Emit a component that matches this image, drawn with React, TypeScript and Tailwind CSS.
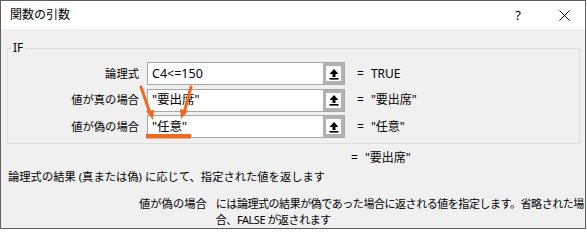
import React from "react";

const font = { fontFamily: '"Noto Sans", "Noto Sans CJK JP", sans-serif' };

function RefButton() {
  return (
    <div className="flex h-full w-[21px] items-center justify-center border-[3px] border-[#b2b2b2] bg-white">
      <svg width="10" height="12" viewBox="0 0 10 12">
        <path d="M5 1 L9.5 6 L6.5 6 L6.5 9 L3.5 9 L3.5 6 L0.5 6 Z" fill="#000" />
        <rect x="0.5" y="10" width="9" height="1.6" fill="#000" />
      </svg>
    </div>
  );
}

const rows = [
  { label: "論理式", input: "C4<=150", value: "TRUE" },
  { label: "値が真の場合", input: '"要出席"', value: '"要出席"' },
  { label: "値が偽の場合", input: '"任意"', value: '"任意"' },
];

export default function App() {
  return (
    <div className="relative h-[230px] w-[587px] bg-white text-[11.3px] leading-[16px] text-[#000]" style={font}>
      <div className="flex h-[229px] w-[586px] flex-col border border-[#5f5f5f]">
        <div className="flex h-[29px] items-center bg-white pl-[9px] pr-[15px]">
          <span className="text-[12px]">関数の引数</span>
          <span className="ml-auto mr-[38px] text-[13px] leading-none">?</span>
          <svg width="11" height="11" viewBox="0 0 11 11">
            <path d="M0.5 0.5 L10.5 10.5 M10.5 0.5 L0.5 10.5" stroke="#111" strokeWidth="1" />
          </svg>
        </div>

        <div className="flex-1 bg-[#f0f0f0] pl-[6px] pt-[12px]">
          <fieldset className="w-[573px] border border-[#dcdcdc] pb-[5px] pt-[7px]">
            <legend className="ml-[3px] px-[2px] text-[12px] leading-[14px]">IF</legend>
            <div className="flex flex-col gap-[3.5px]">
              {rows.map((r) => (
                <div key={r.label} className="flex h-[23px] items-center">
                  <div className="w-[131px] text-right">{r.label}</div>
                  <div className="ml-[8px] flex h-[23px] w-[198px] border border-[#a6a6a6] bg-white">
                    <div className="flex flex-1 items-center pl-[4px] text-[12.5px]">{r.input}</div>
                    <RefButton />
                  </div>
                  <span className="ml-[12px] text-[12px]">=</span>
                  <span className="ml-[7px] text-[12px]">{r.value}</span>
                </div>
              ))}
            </div>
          </fieldset>

          <div className="mt-[6px] flex h-[16px] items-center pl-[344px]">
            <span className="text-[12px]">=</span>
            <span className="ml-[7px] text-[12px]">"要出席"</span>
          </div>
          <div className="mt-[3px] pl-[1px]">論理式の結果 (真または偽) に応じて、指定された値を返します</div>

          <div className="mt-[11px] flex w-[578px] whitespace-nowrap pl-[132px]">
            <span>値が偽の場合</span>
            <span className="ml-[9px] text-[11px] tracking-[-0.45px]">
              には論理式の結果が偽であった場合に返される値を指定します。省略された場
              <br />
              合、FALSE が返されます
            </span>
          </div>
        </div>
      </div>

      <svg className="pointer-events-none absolute left-0 top-0" width="587" height="230">
        <g stroke="#ef6a1e" strokeWidth="3" fill="none" strokeLinecap="round">
          <line x1="141" y1="87" x2="150" y2="113" />
          <line x1="191" y1="87" x2="184" y2="113" />
        </g>
        <path d="M153 120 L146 111 L154 110 Z" fill="#ef6a1e" />
        <path d="M181 119 L180 109 L188 111 Z" fill="#ef6a1e" />
        <rect x="146" y="134" width="45" height="4.5" fill="#ef6a1e" />
      </svg>
    </div>
  );
}
